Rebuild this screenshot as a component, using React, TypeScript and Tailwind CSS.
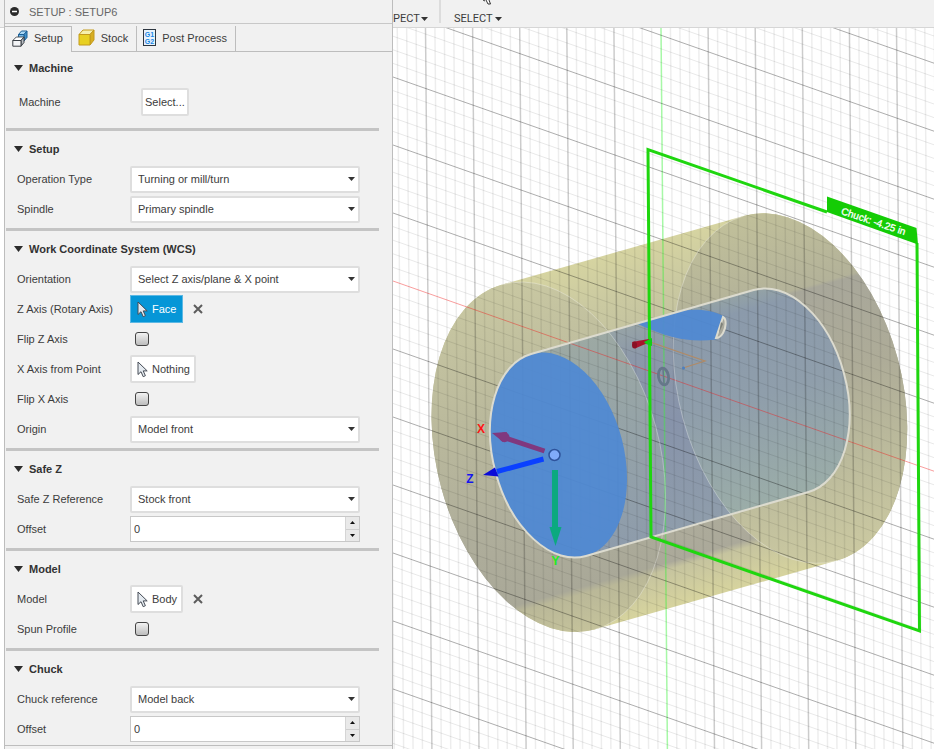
import { useId, useState } from "react";
import type { ReactNode } from "react";

/* ---------- Small icons ---------- */

function CaretDown() {
    return (
        <svg width="7" height="4" viewBox="0 0 7 4" aria-hidden="true">
            <path d="M0 0h7L3.5 4z" fill="#333" />
        </svg>
    );
}

function CursorIcon() {
    return (
        <svg width="11" height="17" viewBox="0 0 11 17" aria-hidden="true">
            <path
                d="M1 1v12.5l3-2.8 2.2 5 2.2-1-2.2-4.8h4z"
                fill="#e4eaf0"
                stroke="#454b55"
                strokeWidth="1"
                strokeLinejoin="round"
            />
        </svg>
    );
}

function ClearIcon() {
    return (
        <svg width="10" height="10" viewBox="0 0 10 10" aria-hidden="true">
            <path d="M1 1l8 8M9 1l-8 8" stroke="#5c5c5c" strokeWidth="2" />
        </svg>
    );
}

function SetupIcon() {
    return (
        <svg width="16" height="17" viewBox="0 0 16 17" aria-hidden="true">
            <path d="M6.5 4.5L9.5 1h5.500l-3 3.500z" fill="#a9d7f5" stroke="#1b5f96" strokeLinejoin="round" />
            <path d="M12 4.500L15 1v6.500l-3 3.500z" fill="#3f8fc9" stroke="#1b5f96" strokeLinejoin="round" />
            <path d="M6.500 4.500H12V10H6.500z" fill="#6fb4e4" stroke="#1b5f96" strokeLinejoin="round" />
            <path d="M.8 10.500L4.300 7H12l-3 3.500z" fill="#fff" stroke="#50555b" strokeLinejoin="round" />
            <path d="M9 10.500L12 7v5.500L9 16.200z" fill="#b9bec4" stroke="#3a3f45" strokeLinejoin="round" />
            <path d="M.8 10.500H9v5.700H.8z" fill="#f3f4f6" stroke="#3a3f45" strokeLinejoin="round" />
        </svg>
    );
}

function StockIcon() {
    return (
        <svg width="17" height="17" viewBox="0 0 17 17" aria-hidden="true">
            <path d="M1 5.500L5 1h11l-4 4.500z" fill="#f6f0ac" stroke="#c39a1d" strokeLinejoin="round" />
            <path d="M12 5.500L16 1v10l-4 5z" fill="#d7ae22" stroke="#c39a1d" strokeLinejoin="round" />
            <path d="M1 5.500h11V16H1z" fill="#e8d022" stroke="#c39a1d" strokeLinejoin="round" />
        </svg>
    );
}

function PostProcessIcon() {
    return (
        <svg width="13" height="17" viewBox="0 0 13 17" aria-hidden="true">
            <rect x=".5" y=".5" width="12" height="16" fill="#e8f3fc" stroke="#2d3640" />
            <text x="6.500" y="8" textAnchor="middle" fontSize="7" fontWeight="bold" fill="#1886e6">
                G1
            </text>
            <text x="6.500" y="15" textAnchor="middle" fontSize="7" fontWeight="bold" fill="#1886e6">
                G2
            </text>
        </svg>
    );
}

/* ---------- Form controls ---------- */

function Row({ label, htmlFor, children }: { label: string; htmlFor: string; children: ReactNode }) {
    return (
        <div className="flex h-[30px] items-center pl-[11px]">
            <label htmlFor={htmlFor} className="w-[113px] shrink-0 whitespace-nowrap">
                {label}
            </label>
            {children}
        </div>
    );
}

function SelectRow({ label, options }: { label: string; options: string[] }) {
    const id = useId();

    return (
        <Row label={label} htmlFor={id}>
            <div className="relative w-[230px]">
                <select
                    id={id}
                    className="h-[27px] w-full appearance-none rounded-[2px] border-2 border-[#dedede] bg-white pr-5 pl-[6px] outline-none"
                >
                    {options.map((option) => (
                        <option key={option}>{option}</option>
                    ))}
                </select>
                <span className="pointer-events-none absolute inset-y-0 right-[5px] flex items-center">
                    <CaretDown />
                </span>
            </div>
        </Row>
    );
}

function CheckRow({ label }: { label: string }) {
    const id = useId();

    return (
        <Row label={label} htmlFor={id}>
            <input
                id={id}
                type="checkbox"
                className="ml-[5px] size-[14px] appearance-none rounded-[3px] border border-[#444] bg-linear-to-b from-[#f2f2f2] to-[#bdbdbd] checked:to-[#0696d7]"
            />
        </Row>
    );
}

function PickRow({
    label,
    value,
    active = false,
    clearable = false,
}: {
    label: string;
    value: string;
    active?: boolean;
    clearable?: boolean;
}) {
    const id = useId();

    return (
        <Row label={label} htmlFor={id}>
            <button
                id={id}
                type="button"
                className={
                    active
                        ? "flex h-[28px] items-center gap-1 border border-[#5cb8e4] bg-[#0696d7] px-[6px] text-white"
                        : "flex h-[28px] items-center gap-1 rounded-[2px] border-2 border-[#dedede] bg-white pr-1 pl-[5px]"
                }
            >
                <CursorIcon />
                {value}
            </button>
            {clearable && (
                <button type="button" aria-label={`Clear ${label}`} className="ml-[10px]">
                    <ClearIcon />
                </button>
            )}
        </Row>
    );
}

function OffsetRow() {
    const id = useId();
    const [value, setValue] = useState("0");
    const step = (by: number) => setValue(String((Number(value) || 0) + by));

    return (
        <Row label="Offset" htmlFor={id}>
            <div className="flex h-[26px] w-[230px] border border-[#c8c8c8] bg-white">
                <input
                    id={id}
                    value={value}
                    onChange={(e) => setValue(e.target.value)}
                    className="min-w-0 flex-1 px-[3px] outline-none"
                />
                <div className="flex w-[14px] flex-col divide-y divide-[#cfcfcf] border-l border-[#d5d5d5] bg-[#e9e9e9]">
                    <button
                        type="button"
                        aria-label="Increase"
                        onClick={() => step(1)}
                        className="flex flex-1 items-center justify-center"
                    >
                        <svg width="5" height="3" viewBox="0 0 5 3">
                            <path d="M0 3h5L2.500 0z" fill="#111" />
                        </svg>
                    </button>
                    <button
                        type="button"
                        aria-label="Decrease"
                        onClick={() => step(-1)}
                        className="flex flex-1 items-center justify-center"
                    >
                        <svg width="5" height="3" viewBox="0 0 5 3">
                            <path d="M0 0h5L2.500 3z" fill="#111" />
                        </svg>
                    </button>
                </div>
            </div>
        </Row>
    );
}

function SectionTitle({ children }: { children: ReactNode }) {
    return (
        <h2 className="flex h-[30px] items-center gap-[6px] pl-2 font-bold text-[#333]">
            <svg width="9" height="6" viewBox="0 0 9 6" aria-hidden="true">
                <path d="M0 0h9L4.500 6z" fill="#2b2b2b" />
            </svg>
            {children}
        </h2>
    );
}

function Section({ title, children }: { title: string; children: ReactNode }) {
    return (
        <section className="mr-[13px] border-b-3 border-[#c4c4c4] pt-[3px] pb-1 last:border-b-0 last:pb-0">
            <SectionTitle>{title}</SectionTitle>
            {children}
        </section>
    );
}

/* ---------- Setup panel ---------- */

const tabs = [
    { name: "Setup", icon: <SetupIcon /> },
    { name: "Stock", icon: <StockIcon /> },
    { name: "Post Process", icon: <PostProcessIcon /> },
];

function SetupPanel() {
    return (
        <aside className="flex w-[389px] shrink-0 flex-col border-x border-[#bdbdbd] bg-[#f1f1f1]">
            <header className="flex h-[24px] items-center gap-[10px] border-b border-[#c8c8c8] pl-[5px] text-[#666]">
                <button type="button" aria-label="Collapse">
                    <svg width="9" height="9" viewBox="0 0 9 9">
                        <circle cx="4.500" cy="4.500" r="4.500" fill="#2b2b2b" />
                        <path d="M2 4.500h5" stroke="#fff" strokeWidth="1.500" />
                    </svg>
                </button>
                <h1>SETUP : SETUP6</h1>
            </header>

            <nav className="flex h-[28px]">
                {tabs.map((tab, i) => (
                    <button
                        key={tab.name}
                        type="button"
                        className={
                            i === 0
                                ? "mt-[2px] flex items-center gap-[6px] border-t border-r border-[#bdbdbd] pr-2 pb-[3px] pl-[7px]"
                                : "mt-[2px] flex items-center gap-[6px] border-r border-b border-[#bdbdbd] pr-2 pb-[2px] pl-[6px]"
                        }
                    >
                        {tab.icon}
                        {tab.name}
                    </button>
                ))}
                <div className="flex-1 border-b border-[#bdbdbd]" />
            </nav>

            <form className="flex-1 pl-px">
                <section className="mr-[13px] border-b-3 border-[#c4c4c4] pt-px pb-[7px]">
                    <SectionTitle>Machine</SectionTitle>
                    <div className="flex h-[38px] items-center pl-[13px]">
                        <label htmlFor="machine" className="w-[122px]">
                            Machine
                        </label>
                        <button
                            id="machine"
                            type="button"
                            className="h-[28px] rounded-[2px] border-2 border-[#dedede] bg-white px-[2px]"
                        >
                            Select...
                        </button>
                    </div>
                </section>

                <Section title="Setup">
                    <SelectRow label="Operation Type" options={["Turning or mill/turn", "Milling", "Cutting"]} />
                    <SelectRow label="Spindle" options={["Primary spindle", "Secondary spindle"]} />
                </Section>

                <Section title="Work Coordinate System (WCS)">
                    <SelectRow label="Orientation" options={["Select Z axis/plane & X point", "Model orientation"]} />
                    <PickRow label="Z Axis (Rotary Axis)" value="Face" active clearable />
                    <CheckRow label="Flip Z Axis" />
                    <PickRow label="X Axis from Point" value="Nothing" />
                    <CheckRow label="Flip X Axis" />
                    <SelectRow label="Origin" options={["Model front", "Model back"]} />
                </Section>

                <Section title="Safe Z">
                    <SelectRow label="Safe Z Reference" options={["Stock front", "Stock back"]} />
                    <OffsetRow />
                </Section>

                <Section title="Model">
                    <PickRow label="Model" value="Body" clearable />
                    <CheckRow label="Spun Profile" />
                </Section>

                <Section title="Chuck">
                    <SelectRow label="Chuck reference" options={["Model back", "Model front"]} />
                    <OffsetRow />
                </Section>
            </form>

            <footer className="h-[4px] border-t border-[#bdbdbd]" />
        </aside>
    );
}

/* ---------- 3D viewport ---------- */

const STOCK_OUTLINE =
    "M501.7 284.700A111.500 178.500 -14.700 0 0 595.300 629.300L837 560.600A111.500 178.500 -14.700 0 0 743.500 216Z";
const STOCK_FRONT =
    "M501.7 284.700A111.500 178.500 -14.700 0 0 595.300 629.300A111.500 178.500 -14.700 0 0 501.700 284.700Z";
const STOCK_BACK =
    "M743.5 216A111.500 178.500 -14.700 0 0 837 560.600A111.500 178.500 -14.700 0 0 743.500 216Z";
const MODEL_OUTLINE =
    "M531.100 354A65.300 104.600 -14.700 0 0 586 556L808.500 492A65.300 104.600 -14.700 0 0 753.600 290Z";

// Grid lines, every fifth one is a major line
const columns = Array.from({ length: 64 }, (_, i) => i - 31);
const rows = Array.from({ length: 76 }, (_, i) => i - 34);

function Grid() {
    return (
        <g>
            {columns.map((k) => {
                const x = 661 + k * 9.42;
                const major = k % 5 === 0;
                return (
                    <line
                        key={k}
                        x1={x}
                        y1="28"
                        x2={x + 6.4}
                        y2="749"
                        stroke={k === 0 ? "#3cf03c" : "#000"}
                        strokeOpacity={k === 0 ? 0.45 : major ? 0.2 : 0.07}
                        strokeWidth="1.500"
                    />
                );
            })}
            {rows.map((k) => {
                const y = 281 + k * 13.6;
                const major = k % 5 === 0;
                return (
                    <line
                        key={k}
                        x1="393"
                        y1={y}
                        x2="934"
                        y2={y + 190.2}
                        stroke={k === 0 ? "#f01818" : "#000"}
                        strokeOpacity={k === 0 ? 0.42 : major ? 0.32 : 0.09}
                        strokeWidth="1"
                    />
                );
            })}
        </g>
    );
}

function Gradient({ id, stops }: { id: string; stops: [number, string][] }) {
    return (
        <linearGradient id={id} gradientUnits="userSpaceOnUse" x1="620" y1="250" x2="717" y2="593">
            {stops.map(([offset, color], i) => (
                <stop key={i} offset={offset} stopColor={color} />
            ))}
        </linearGradient>
    );
}

function Viewport() {
    return (
        <svg
            viewBox="393 28 541 721"
            preserveAspectRatio="xMidYMid slice"
            className="absolute inset-0 h-full w-full"
            role="img"
            aria-label="Turning setup with stock, model and chuck plane"
        >
            <defs>
                <Gradient
                    id="stock"
                    stops={[[0, "#d6d4a1"], [0.12, "#cbcaa1"], [0.45, "#b6b59d"], [0.88, "#aba99a"], [0.9, "#c6c49f"], [1, "#d6d39e"]]}
                />
                <Gradient
                    id="stockFront"
                    stops={[[0, "#c9c8a2"], [0.35, "#bab99c"], [0.65, "#afae9b"], [0.88, "#a9a898"], [0.9, "#bab898"], [1, "#c4c29b"]]}
                />
                <Gradient
                    id="stockBack"
                    stops={[[0, "#c1c09a"], [0.24, "#b3b299"], [0.25, "#a8a79a"], [0.5, "#aeac98"], [0.75, "#bcbb9c"], [1, "#cbc9a1"]]}
                />
                <Gradient
                    id="model"
                    stops={[[0.2, "#98a5a6"], [0.3, "#8c98a9"], [0.5, "#8793aa"], [0.8, "#8f9dab"]]}
                />
                <Gradient id="modelFront" stops={[[0.2, "#9da9a3"], [0.45, "#96a4a7"], [0.8, "#8e9cab"]]} />
                <Gradient
                    id="modelBack"
                    stops={[[0.2, "#96a4a3"], [0.24, "#8f9ea9"], [0.26, "#8b9aab"], [0.5, "#8f9eab"], [0.8, "#9bada8"]]}
                />
                <clipPath id="inModel">
                    <path d={MODEL_OUTLINE} />
                </clipPath>
            </defs>

            <rect x="393" y="28" width="541" height="721" fill="#fff" />

            {/* Stock */}
            <path d={STOCK_OUTLINE} fill="url(#stock)" />
            <path d={STOCK_BACK} fill="url(#stockBack)" />
            <path d={STOCK_FRONT} fill="url(#stockFront)" />

            {/* Model body */}
            <path d={MODEL_OUTLINE} fill="url(#model)" />
            <g clipPath="url(#inModel)">
                <path d={STOCK_BACK} fill="url(#modelBack)" />
                <path d={STOCK_FRONT} fill="url(#modelFront)" />
            </g>

            <Grid />

            {/* Edges of the stock seen through the body */}
            <g fill="none" stroke="#fff" strokeOpacity="0.3">
                <path d="M501.700 284.700A111.500 178.500 -14.700 0 1 595.300 629.300" />
                <path d="M743.500 216A111.500 178.500 -14.700 0 0 837 560.600" />
            </g>

            {/* Selected faces */}
            <ellipse
                rx="65.300"
                ry="104.600"
                transform="translate(558.500 455) rotate(-14.700)"
                fill="#5089d2"
                fillOpacity="0.94"
            />
            <path
                d="M638 324L672 313C690 308.500 710 308 725 317L716 339.500C690 343 668 338 638 324Z"
                fill="#5089d2"
                fillOpacity="0.95"
            />
            <path d={MODEL_OUTLINE} fill="none" stroke="#dcdbcf" strokeWidth="2" />
            <path d="M723 317C727 319 726 328 723 333Q720 338 716 338Z" fill="#a8a89c" stroke="#dcdbcf" strokeWidth="2" />
            <path d="M721 322L723 324L719 333Z" fill="#7d8078" />

            {/* Work origin of the model */}
            <path d="M650 342L705 361L683 368" fill="none" stroke="#b08a66" strokeWidth="1.200" />
            <circle cx="683.500" cy="368" r="1.500" fill="#4b7fc0" />
            <ellipse
                rx="5"
                ry="8.500"
                transform="translate(663.500 376.500) rotate(-10)"
                fill="none"
                stroke="#66778a"
                strokeWidth="2.800"
            />
            <path d="M663 369L664 384" stroke="#66778a" strokeWidth="1.500" />

            {/* Chuck plane */}
            <g fill="none" stroke="#1fd60f" strokeWidth="3" strokeLinejoin="miter">
                <path d="M827 212L648 149.500L651 537L919.500 631L917 243" />
            </g>
            <path d="M827 196.500L916.500 228L918 244.500L827 212Z" fill="#14cc05" />
            <text fontSize="10" fill="#fff" stroke="#fff" strokeWidth="0.300" transform="translate(840.500 214) rotate(18.500)">
                Chuck: -4.25 in
            </text>
            <path d="M632 342L649 339L650 342L635 348.500Z" fill="#a8142c" />
            <ellipse cx="634.500" cy="345" rx="2.500" ry="3.500" fill="#8a1024" />
            <path d="M644 342L652 338V346L646 344Z" fill="#12cc18" />

            {/* WCS triad */}
            <g fontSize="12" fontWeight="bold" textAnchor="middle">
                <text x="481" y="433" fill="#ff1414">X</text>
                <text x="470" y="483" fill="#1414f0">Z</text>
                <text x="555.500" y="565" fill="#22ee22">Y</text>
            </g>
            <path d="M544.500 451L504 437.500" stroke="#80387f" strokeWidth="5" />
            <path d="M492 433L507 432L503 442Z" fill="#80387f" />
            <circle cx="504.500" cy="437.300" r="5" fill="#80387f" />
            <path d="M543.500 459L497 471.500" stroke="#0a40ff" strokeWidth="5" />
            <path d="M483 475L495 467.500L498.500 476.500Z" fill="#0a0ad8" />
            <path d="M555 470V528" stroke="#0ca97f" strokeWidth="6" />
            <path d="M549.500 527H561.500L555.500 546Z" fill="#0ca97f" />
            <circle cx="554.500" cy="455" r="5.500" fill="#80abfa" stroke="#2e539c" strokeWidth="1.500" />
        </svg>
    );
}

function Toolbar() {
    return (
        <div className="relative flex h-[28px] items-end overflow-hidden border-b border-[#d6d6d6] bg-[#f1f1f1] font-[Roboto,sans-serif]">
            <button type="button" className="flex h-4 w-[46px] items-center gap-px whitespace-nowrap">
                PECT
                <CaretDown />
            </button>
            <div className="h-full w-[2px] border-b-4 border-[#f1f1f1] bg-[#dcdcdc]" />
            <button type="button" className="ml-[13px] flex h-4 items-center gap-[2px] whitespace-nowrap">
                SELECT
                <CaretDown />
            </button>
            <svg className="absolute top-0 left-[90px]" width="10" height="5" viewBox="0 0 10 5" aria-hidden="true">
                <path d="M0 0l2 1M3 0l2 4h2.500L6 0" fill="#fff" stroke="#333" />
            </svg>
        </div>
    );
}

function App() {
    return (
        <div className="flex min-h-screen bg-white font-['Liberation_Sans',Arial,sans-serif] text-[11px] leading-4 text-[#3c3c3c]">
            {/* Edge of the window behind the panel */}
            <div className="w-1 shrink-0">
                <div className="h-[28px] border-b border-[#d6d6d6] bg-[#f1f1f1]" />
            </div>

            <SetupPanel />

            <main className="flex min-w-0 flex-1 flex-col">
                <Toolbar />
                <div className="relative min-h-[400px] flex-1 overflow-hidden">
                    <Viewport />
                </div>
            </main>
        </div>
    );
}

export default App;
